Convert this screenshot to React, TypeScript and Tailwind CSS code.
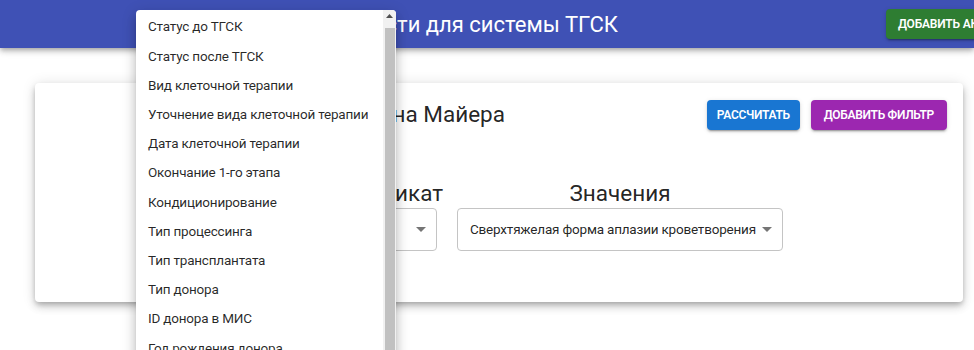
import React from "react";

const menuItems = [
  "Статус до ТГСК",
  "Статус после ТГСК",
  "Вид клеточной терапии",
  "Уточнение вида клеточной терапии",
  "Дата клеточной терапии",
  "Окончание 1-го этапа",
  "Кондиционирование",
  "Тип процессинга",
  "Тип трансплантата",
  "Тип донора",
  "ID донора в МИС",
  "Год рождения донора",
  "Пол донора",
];

function Arrow() {
  return (
    <svg width="10" height="5" viewBox="0 0 10 5" className="shrink-0">
      <path d="M0 0l5 5 5-5z" fill="rgba(0,0,0,0.54)" />
    </svg>
  );
}

function Select({ value, width }: { value: string; width: string }) {
  return (
    <div
      className={`${width} h-[43px] border border-[#c4c4c4] rounded-[4px] flex items-center pl-[12px] pr-[10px] bg-white`}
    >
      <span className="flex-1 text-[13.5px] tracking-[-0.2px] text-[rgba(0,0,0,0.87)] whitespace-nowrap overflow-hidden">
        {value}
      </span>
      <Arrow />
    </div>
  );
}

const btnShadow =
  "shadow-[0_3px_1px_-2px_rgba(0,0,0,0.2),0_2px_2px_0_rgba(0,0,0,0.14),0_1px_5px_0_rgba(0,0,0,0.12)]";

export default function App() {
  return (
    <div className="relative w-[974px] h-[350px] overflow-hidden bg-white font-['Roboto',sans-serif]">
      <header className="relative z-10 h-[48px] bg-[#3f51b5] flex items-center shadow-[0_2px_4px_-1px_rgba(0,0,0,0.2),0_4px_5px_0_rgba(0,0,0,0.14),0_1px_10px_0_rgba(0,0,0,0.12)]">
        <div className="w-[618px] shrink-0 flex justify-end text-white text-[22px] font-normal whitespace-nowrap">
          Модуль отчетности для системы ТГСК
        </div>
        <button
          className={`ml-[268px] shrink-0 h-[30px] px-[12px] rounded-[4px] bg-[#2e7d32] text-white text-[12px] font-semibold uppercase tracking-[-0.2px] whitespace-nowrap ${btnShadow}`}
        >
          Добавить аккаунт
        </button>
      </header>

      <main className="pt-[35px] pl-[35px]">
        <section className="w-[928px] h-[219px] bg-white rounded-[4px] shadow-[0_3px_5px_-1px_rgba(0,0,0,0.2),0_5px_8px_0_rgba(0,0,0,0.14),0_1px_14px_0_rgba(0,0,0,0.12)] px-[16px] pt-[15px]">
          <div className="flex items-center">
            <div className="w-[454px] shrink-0 flex justify-end text-[22.5px] text-[rgba(0,0,0,0.87)] whitespace-nowrap">
              Кривая Каплана Майера
            </div>
            <div className="ml-auto flex gap-[11px]">
              <button
                className={`h-[30px] px-[10px] rounded-[4px] bg-[#1976d2] text-white text-[12px] font-semibold uppercase tracking-[-0.3px] ${btnShadow}`}
              >
                Рассчитать
              </button>
              <button
                className={`h-[30px] px-[13px] rounded-[4px] bg-[#9c27b0] text-white text-[12px] font-semibold uppercase tracking-[-0.3px] ${btnShadow}`}
              >
                Добавить фильтр
              </button>
            </div>
          </div>

          <div className="mt-[46px] pl-[85px] flex gap-[20px]">
            <div className="w-[191px] flex flex-col items-center">
              <div className="h-[30px] text-[23px] leading-[30px] text-[rgba(0,0,0,0.87)]">Параметр</div>
              <Select value="Диагноз" width="w-[191px]" />
            </div>
            <div className="w-[90px] flex flex-col items-center">
              <div className="h-[30px] text-[22.5px] leading-[30px] text-[rgba(0,0,0,0.87)] whitespace-nowrap">Предикат</div>
              <Select value="=" width="w-[90px]" />
            </div>
            <div className="w-[326px] flex flex-col items-center">
              <div className="h-[30px] text-[22.5px] leading-[30px] text-[rgba(0,0,0,0.87)]">Значения</div>
              <Select value="Сверхтяжелая форма аплазии кроветворения" width="w-[326px]" />
            </div>
          </div>
        </section>
      </main>

      <div className="absolute z-20 left-[136px] top-[10px] w-[260px] h-[360px] bg-white rounded-[4px] overflow-hidden shadow-[0_5px_5px_-3px_rgba(0,0,0,0.2),0_8px_10px_1px_rgba(0,0,0,0.14),0_3px_14px_2px_rgba(0,0,0,0.12)]">
        <ul className="pt-[2px] pr-[13px]">
          {menuItems.map((t) => (
            <li
              key={t}
              className="h-[29.2px] flex items-center pl-[12px] text-[13.5px] tracking-[-0.2px] text-[rgba(0,0,0,0.85)] whitespace-nowrap"
            >
              {t}
            </li>
          ))}
        </ul>
        <div className="absolute right-0 top-0 bottom-0 w-[13px] bg-[#f1f1f1] flex flex-col items-center">
          <svg width="7" height="4" viewBox="0 0 7 4" className="mt-[4px]">
            <path d="M0 4l3.5-4 3.5 4z" fill="#505050" />
          </svg>
          <div className="mt-[10px] w-[10px] flex-1 bg-[#c1c1c1]" />
        </div>
      </div>
    </div>
  );
}
